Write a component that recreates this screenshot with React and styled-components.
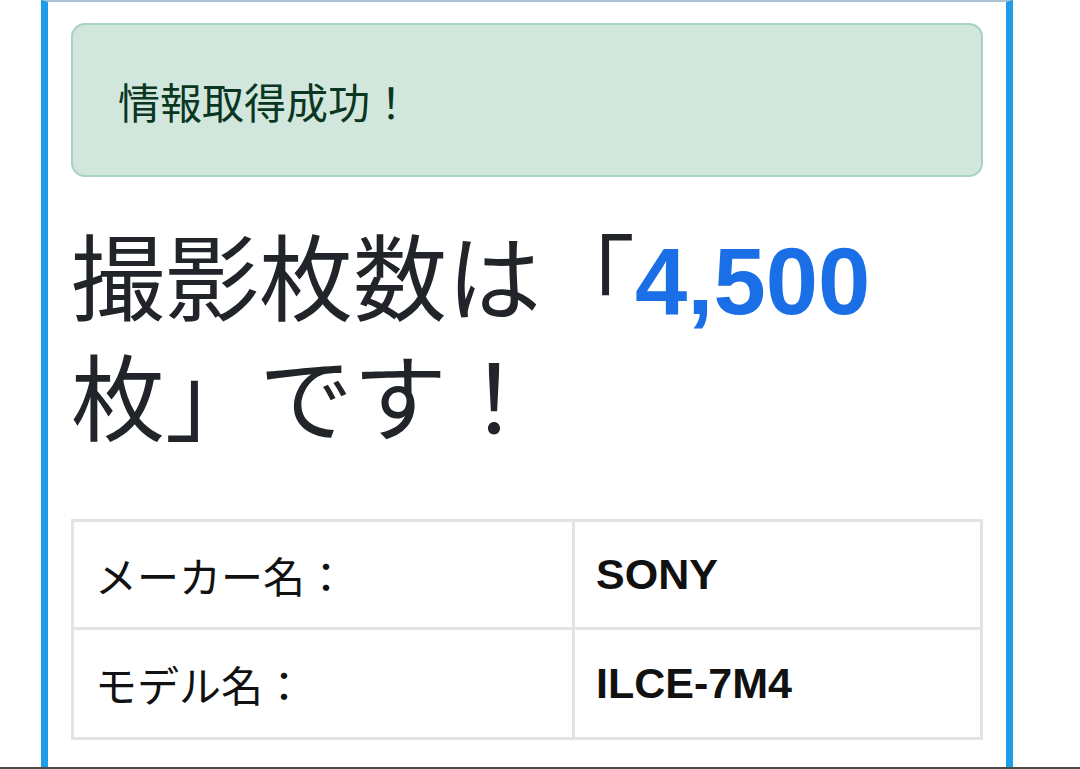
import React from "react";
import styled, { createGlobalStyle } from "styled-components";

const GlobalStyle = createGlobalStyle`
  html, body { margin: 0; padding: 0; background: #ffffff; }
  body {
    font-family: "Liberation Sans", "Noto Sans CJK JP", sans-serif;
    color: #212529;
    overflow: hidden;
  }
`;

const Screen = styled.div`
  height: 769px;
  display: flex;
  flex-direction: column;
`;

const Frame = styled.main`
  flex: 1;
  margin-left: 41px;
  width: 912px;
  border-left: 7px solid #1e9ee8;
  border-right: 7px solid #1e9ee8;
  border-top: 2px solid #a9c3d3;
  padding: 21px 23px 0 23px;
  box-sizing: content-box;
  overflow: hidden;
`;

const BottomBar = styled.div`
  height: 2px;
  background: #4a4a4a;
`;

const Alert = styled.div`
  box-sizing: border-box;
  height: 154px;
  display: flex;
  align-items: center;
  padding: 0 45px;
  background: #d1e7dd;
  border: 2px solid #a9d2bf;
  border-radius: 14px;
  color: #0a3622;
  font-family: "Noto Sans CJK JP", sans-serif;
  font-size: 42px;
  line-height: 1.5;
`;

const Heading = styled.h1`
  margin: 45px 0 57px 0;
  font-family: "Liberation Sans", "Noto Sans CJK JP", sans-serif;
  font-weight: 400;
  font-size: 94px;
  line-height: 120px;
  color: #212529;
`;

const Count = styled.span`
  color: #1a6fe6;
  font-weight: 700;
`;

const Table = styled.table`
  width: 912px;
  border-collapse: collapse;
  table-layout: fixed;
`;

const Row = styled.tr``;

const Cell = styled.td`
  box-sizing: border-box;
  height: ${(p) => (p.$first ? "108px" : "110px")};
  border: 3px solid #e1e4e7;
  padding: 0 0 0 21px;
  vertical-align: middle;
  font-size: ${(p) => (p.$value ? "43px" : "42px")};
  font-weight: ${(p) => (p.$value ? 700 : 400)};
  font-family: ${(p) =>
    p.$value
      ? '"Liberation Sans", sans-serif'
      : '"Noto Sans CJK JP", sans-serif'};
  color: #111;
  width: ${(p) => (p.$value ? "auto" : "501px")};
`;

const rows = [
  { label: "メーカー名：", value: "SONY" },
  { label: "モデル名：", value: "ILCE-7M4" },
];

export default function App() {
  return (
    <>
      <GlobalStyle />
      <Screen>
        <Frame>
          <Alert>情報取得成功！</Alert>
          <Heading>
            撮影枚数は「<Count>4,500</Count>枚」です！
          </Heading>
          <Table>
            <tbody>
              {rows.map((r, i) => (
                <Row key={r.label}>
                  <Cell $first={i === 0}>{r.label}</Cell>
                  <Cell $first={i === 0} $value>
                    {r.value}
                  </Cell>
                </Row>
              ))}
            </tbody>
          </Table>
        </Frame>
        <BottomBar />
      </Screen>
    </>
  );
}
